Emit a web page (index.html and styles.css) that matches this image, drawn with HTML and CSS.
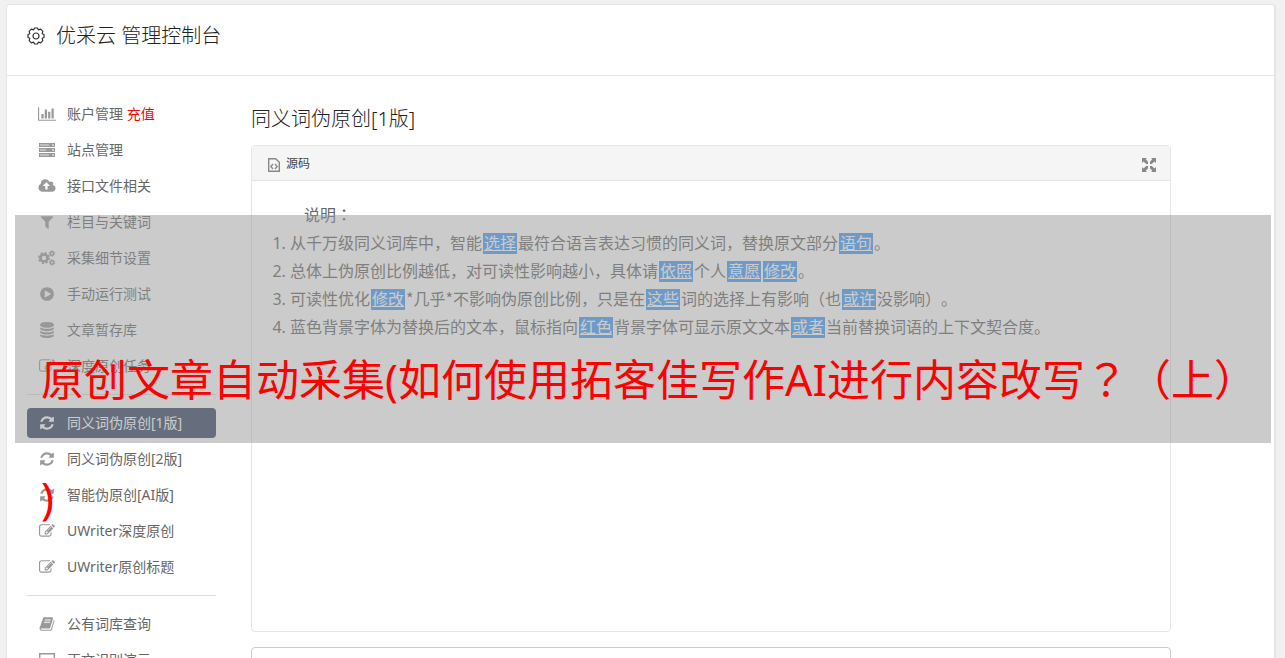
FILE: index.html
```html
<!DOCTYPE html>
<html lang="zh-CN">
<head>
    <meta charset="UTF-8">
    <meta name="viewport" content="width=device-width, initial-scale=1.0">
    <title>优采云 管理控制台</title>
    <link rel="stylesheet" href="styles.css">
</head>
<body>
    <svg class="sprite" aria-hidden="true">
        <symbol id="i-chart" viewBox="0 0 2048 1792"><path d="M640 896v512h-256v-512h256zm384-512v1024h-256v-1024h256zm1024 1152v128h-2048v-1536h128v1408h1920zm-640-896v768h-256v-768h256zm384-384v1152h-256v-1152h256z"/></symbol>
        <symbol id="i-server" viewBox="0 0 18 16"><path d="M1 1h16v4H1zM1 6h16v4H1zM1 11h16v4H1z"/><path d="M2 3h9M2 8h6M2 13h9" stroke="#e4e4e4"/><path d="M14 3h2M14 8h2M14 13h2" stroke="#fff"/></symbol>
        <symbol id="i-cloud" viewBox="0 0 1920 1792"><path d="M1280 864q0-14-9-23l-352-352q-9-9-23-9t-23 9l-351 351q-10 12-10 24 0 14 9 23t23 9h224v352q0 13 9.500 22.500t22.500 9.500h192q13 0 22.500-9.500t9.500-22.500v-352h224q13 0 22.500-9.500t9.500-22.500zm640 288q0 159-112.500 271.500t-271.500 112.500h-1088q-185 0-316.500-131.500t-131.500-316.500q0-130 70-240t188-165q-2-30-2-43 0-212 150-362t362-150q156 0 285.500 87t188.500 231q71-62 166-62 106 0 181 75t75 181q0 76-41 138 130 31 213.500 135.500t83.500 238.500z"/></symbol>
        <symbol id="i-filter" viewBox="0 0 1792 1792"><path d="M1595 295q17 41-14 70l-493 493v742q0 42-39 59-13 5-25 5-27 0-45-19l-256-256q-19-19-19-45v-486l-493-493q-31-29-14-70 17-39 59-39h1280q42 0 59 39z"/></symbol>
        <symbol id="i-cogs" viewBox="0 0 18 16">
            <g fill="none" stroke="currentColor">
                <circle cx="6" cy="8" r="3.500" stroke-width="2.600"/>
                <circle cx="6" cy="8" r="5.200" stroke-width="1.600" stroke-dasharray="2.040"/>
                <circle cx="14" cy="3.500" r="1.700" stroke-width="1.400"/>
                <circle cx="14" cy="3.500" r="2.700" stroke-width="1" stroke-dasharray="1.410"/>
                <circle cx="14" cy="12.500" r="1.700" stroke-width="1.400"/>
                <circle cx="14" cy="12.500" r="2.700" stroke-width="1" stroke-dasharray="1.410"/>
            </g>
        </symbol>
        <symbol id="i-play" viewBox="0 0 1792 1792"><path d="M896 128q209 0 385.500 103t279.500 279.500 103 385.500-103 385.500-279.500 279.500-385.500 103-385.500-103-279.500-279.500-103-385.500 103-385.500 279.500-279.500 385.500-103zm384 823q32-18 32-55t-32-55l-544-320q-31-19-64-1-32 19-32 56v640q0 37 32 56 16 8 32 8 17 0 32-9z"/></symbol>
        <symbol id="i-database" viewBox="0 0 1792 1792"><path d="M896 768q237 0 443-43t325-127v170q0 69-103 128t-280 93.500-385 34.500-385-34.500-280-93.500-103-128v-170q119 84 325 127t443 43zm0 768q237 0 443-43t325-127v170q0 69-103 128t-280 93.500-385 34.500-385-34.500-280-93.500-103-128v-170q119 84 325 127t443 43zm0-384q237 0 443-43t325-127v170q0 69-103 128t-280 93.500-385 34.500-385-34.500-280-93.500-103-128v-170q119 84 325 127t443 43zm0-1152q208 0 385 34.500t280 93.500 103 128v128q0 69-103 128t-280 93.500-385 34.500-385-34.500-280-93.500-103-128v-128q0-69 103-128t280-93.500 385-34.500z"/></symbol>
        <symbol id="i-refresh" viewBox="0 0 1792 1792"><path d="M1639 1056q0 5-1 7-64 268-268 434.500t-478 166.500q-146 0-282.500-55t-243.500-157l-129 129q-19 19-45 19t-45-19-19-45v-448q0-26 19-45t45-19h448q26 0 45 19t19 45-19 45l-137 137q71 66 161 102t187 36q134 0 250-65t186-179q11-17 53-117 8-23 30-23h192q13 0 22.500 9.500t9.500 22.500zm25-800v448q0 26-19 45t-45 19h-448q-26 0-45-19t-19-45 19-45l138-138q-148-137-349-137-134 0-250 65t-186 179q-11 17-53 117-8 23-30 23h-199q-13 0-22.500-9.500t-9.500-22.500v-7q65-268 270-434.500t480-166.500q146 0 284 55.500t245 156.500l130-129q19-19 45-19t45 19 19 45z"/></symbol>
        <symbol id="i-edit" viewBox="0 0 1792 1792"><path d="M888 1184l116-116-152-152-116 116v56h96v96h56zm440-720q-16-16-33 1l-350 350q-17 17-1 33t33-1l350-350q17-17 1-33zm80 594v190q0 119-84.500 203.500t-203.500 84.500h-832q-119 0-203.500-84.500t-84.500-203.500v-832q0-119 84.500-203.500t203.500-84.500h832q63 0 117 25 15 7 18 23 3 17-9 29l-49 49q-14 14-32 8-23-6-45-6h-832q-66 0-113 47t-47 113v832q0 66 47 113t113 47h832q66 0 113-47t47-113v-126q0-13 9-22l64-64q15-15 35-7t20 29zm-96-738l288 288-672 672h-288v-288zm444 132l-92 92-288-288 92-92q28-28 68-28t68 28l152 152q28 28 28 68t-28 68z"/></symbol>
        <symbol id="i-book" viewBox="0 0 1792 1792"><path d="M1703 478q40 57 18 129l-275 906q-19 64-76.500 107.500t-122.500 43.500h-923q-77 0-148.500-53.500t-99.500-131.500q-24-67-2-127 0-4 3-27t4-37q1-8-3-21.500t-3-19.500q2-11 8-21t16.500-23.500 16.500-23.500q23-38 45-91.500t30-91.500q3-10 .5-30t-.5-28q3-11 17-28t17-23q21-36 42-92t25-90q1-9-2.500-32t.5-28q4-13 22-30.500t22-22.500q19-26 42.500-84.500t27.500-96.500q1-8-3-25.500t-2-26.500q2-8 9-18t18-23 17-21q8-12 16.500-30.500t15-35 16-36 19.500-32 26.500-23.500 36-11.500 47.500 5.500l-1 3q38-9 51-9h761q74 0 114 56t18 130l-274 906q-36 119-71.500 153.500t-128.500 34.500h-869q-27 0-38 15-11 16-1 43 24 70 144 70h923q29 0 56-15.500t35-41.500l300-987q7-22 5-57 38 15 59 43zm-1064 2q-4 13 2 22.500t20 9.500h608q13 0 25.500-9.500t16.500-22.500l21-64q4-13-2-22.500t-20-9.500h-608q-13 0-25.500 9.500t-16.500 22.500zm-83 256q-4 13 2 22.500t20 9.500h608q13 0 25.500-9.500t16.500-22.500l21-64q4-13-2-22.500t-20-9.500h-608q-13 0-25.500 9.500t-16.500 22.500z"/></symbol>
        <symbol id="i-screen" viewBox="0 0 18 16"><path d="M1.700 1.700h14.600v10H1.700zM6 15h6" fill="none" stroke="currentColor" stroke-width="1.400"/></symbol>
    </svg>

    <div class="container">
        <header class="top">
            <svg class="gear" viewBox="-9 -9 18 18" aria-hidden="true">
                <path d="M-1.500 -8H1.500L2.300 -6.200L4.700 -6.800L6.800 -4.700L6.200 -2.300L8 -1.500V1.500L6.200 2.300L6.800 4.700L4.700 6.800L2.300 6.200L1.500 8H-1.500L-2.300 6.200L-4.700 6.800L-6.800 4.700L-6.200 2.300L-8 1.500V-1.500L-6.200 -2.300L-6.800 -4.700L-4.700 -6.800L-2.300 -6.200Z"/>
                <circle r="3"/>
            </svg>
            <h1>优采云 管理控制台</h1>
        </header>

        <div class="content">
            <nav class="sidebar">
                <a href="#"><svg class="wide"><use href="#i-chart"/></svg><span>账户管理 <em>充值</em></span></a>
                <a href="#"><svg class="wide"><use href="#i-server"/></svg>站点管理</a>
                <a href="#"><svg class="wide"><use href="#i-cloud"/></svg>接口文件相关</a>
                <a href="#"><svg><use href="#i-filter"/></svg>栏目与关键词</a>
                <a href="#"><svg class="wide"><use href="#i-cogs"/></svg>采集细节设置</a>
                <a href="#"><svg><use href="#i-play"/></svg>手动运行测试</a>
                <a href="#"><svg><use href="#i-database"/></svg>文章暂存库</a>
                <a href="#"><svg><use href="#i-edit"/></svg>深度原创任务</a>
                <hr>
                <a href="#" class="active"><svg><use href="#i-refresh"/></svg>同义词伪原创[1版]</a>
                <a href="#"><svg><use href="#i-refresh"/></svg>同义词伪原创[2版]</a>
                <a href="#"><svg><use href="#i-refresh"/></svg>智能伪原创[AI版]</a>
                <a href="#"><svg><use href="#i-edit"/></svg>UWriter深度原创</a>
                <a href="#"><svg><use href="#i-edit"/></svg>UWriter原创标题</a>
                <hr>
                <a href="#"><svg><use href="#i-book"/></svg>公有词库查询</a>
                <a href="#"><svg class="wide"><use href="#i-screen"/></svg>正文识别演示</a>
            </nav>

            <main>
                <h2>同义词伪原创[1版]</h2>
                <div class="editor">
                    <div class="toolbar">
                        <button type="button">
                            <svg viewBox="0 0 12 14" width="12" height="14" fill="none" stroke="#888"><path d="M.7.7h7l3.600 3.600v9H.7z" stroke-width="1.400"/><path d="M5 6 2.800 8.500 5 11M7 6l2.200 2.500L7 11" stroke-width="1.300"/></svg>
                            源码
                        </button>
                        <button type="button" aria-label="全屏">
                            <svg viewBox="0 0 14 14" width="14" height="14" fill="#888"><path d="M0 0h5L3.700 1.300 6 3.800V6H4.200L1.500 3.500 0 5zM14 0v5l-1.500-1.500L9.800 6H8V3.800l2.300-2.500L9 0zM0 14V9l1.500 1.500L4.200 8H6v2.200l-2.300 2.500L5 14zM14 14H9l1.300-1.300L8 10.200V8h1.800l2.700 2.500L14 9z"/></svg>
                        </button>
                    </div>
                    <div class="text">
                        <p>说明<span class="mid" lang="zh-TW">：</span></p>
                        <ol>
                            <li>从千万级同义词库中，智能<mark>选择</mark>最符合语言表达习惯的同义词，替换原文部分<mark>语句</mark>。</li>
                            <li>总体上伪原创比例越低，对可读性影响越小，具体请<mark>依照</mark>个人<mark>意愿</mark><mark>修改</mark>。</li>
                            <li>可读性优化<mark>修改</mark><span class="mid">*</span>几乎<span class="mid">*</span>不影响伪原创比例，只是在<mark>这些</mark>词的选择上有影响（也<mark>或许</mark>没影响）。</li>
                            <li>蓝色背景字体为替换后的文本，鼠标指向<mark>红色</mark>背景字体可显示原文文本<mark>或者</mark>当前替换词语的上下文契合度。</li>
                        </ol>
                    </div>
                </div>
                <textarea aria-label="原文"></textarea>
            </main>
        </div>
    </div>

    <!-- title banner over the page -->
    <div class="banner">原创文章自动采集(如何使用拓客佳写作AI进行内容改写<span class="mid" lang="zh-TW">？</span>（上）<br>)</div>
</body>
</html>
```
FILE: styles.css
```css
* {
    box-sizing: border-box;
}

body {
    position: relative;
    height: 100vh;
    margin: 0;
    padding: 4px 9px 0 6px;
    overflow: hidden;
    background-color: #f1f1f1;
    font-family: "Noto Sans", "Noto Sans CJK SC", sans-serif;
    font-size: 14px;
    color: #666;
    text-spacing-trim: space-all;
}

.sprite {
    position: absolute;
    width: 0;
    height: 0;
}

.container {
    background-color: #fff;
    border: 1px solid #e5e5e5;
    border-right-width: 2px;
    border-radius: 4px;
}

/* punctuation set in the middle of its cell */
.mid {
    font-family: "Noto Sans CJK TC", sans-serif;
    line-height: 1;
}

.top {
    display: flex;
    align-items: center;
    gap: 11px;
    height: 71px;
    padding: 0 20px 9px;
    border-bottom: 1px solid #e5e5e5;
}

.gear {
    width: 18px;
    height: 18px;
    fill: none;
    stroke: #333;
    stroke-width: 1.2;
    stroke-linejoin: round;
}

h1,
h2 {
    margin: 0;
    font-size: 20px;
    font-weight: 300;
    line-height: 28px;
    color: #222;
}

.content {
    display: flex;
    gap: 35px;
    padding: 23px 103px 20px 20px;
}

/* Sidebar */
.sidebar {
    display: flex;
    flex-direction: column;
    flex: 0 0 189px;
    gap: 6px;
}

.sidebar a {
    display: flex;
    align-items: center;
    height: 30px;
    padding: 0 0 2px 12px;
    border-radius: 4px;
    color: #666;
    text-decoration: none;
    white-space: nowrap;
}

.sidebar svg {
    width: 16px;
    height: 16px;
    margin: 2px 12px 0 0;
    fill: currentColor;
    color: #999;
}

.sidebar svg.wide {
    width: 18px;
    margin: 2px 11px 0 -1px;
}

.sidebar em {
    font-style: normal;
    color: #f00;
}

.sidebar hr {
    width: 100%;
    height: 1px;
    margin: 7px 0;
    border: 0;
    background-color: #ddd;
}

.sidebar .active,
.sidebar .active svg {
    color: #fff;
}

.sidebar .active {
    background-color: #354563;
}

/* Editor */
main {
    flex: 1;
    min-width: 0;
    padding-top: 6px;
}

.editor {
    margin: 12px 0 15px;
    border: 1px solid #e5e5e5;
    border-radius: 4px;
}

.toolbar {
    display: flex;
    justify-content: space-between;
    align-items: center;
    height: 35px;
    padding: 0 14px 0 16px;
    border-bottom: 1px solid #e5e5e5;
    background-color: #f5f5f5;
}

.toolbar button {
    display: flex;
    align-items: center;
    gap: 6px;
    padding: 0;
    border: 0;
    background: none;
    font: inherit;
    font-size: 12px;
    color: #444;
}

.toolbar svg {
    margin-top: 3px;
}

.text {
    min-height: 450px;
    padding: 20px;
    font-size: 16px;
    line-height: 28px;
}

.text p {
    margin: 0;
    padding-left: 32px;
}

.text ol {
    margin: 0;
    padding-left: 18px;
}

mark {
    display: inline-block;
    margin: 0 1px;
    padding: 0 1px;
    background-color: #459df9;
    color: #fff;
    line-height: 21px;
    text-decoration: underline;
}

textarea {
    display: block;
    width: 100%;
    height: 120px;
    border: 1px solid #ccc;
    border-radius: 4px;
    resize: none;
}

.banner {
    position: absolute;
    top: 215px;
    left: 15px;
    right: 14px;
    height: 228px;
    padding: 106px 0 0 26px;
    background-color: rgba(151, 151, 151, 0.5);
    color: #f00;
    font-size: 43px;
    line-height: 118px;
    white-space: nowrap;
}
```
